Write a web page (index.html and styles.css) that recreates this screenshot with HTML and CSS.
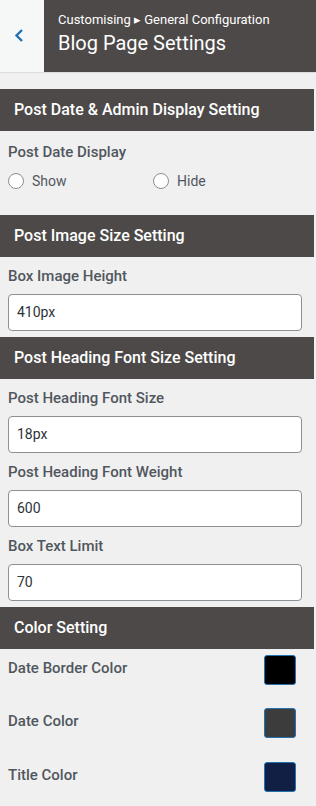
FILE: index.html
```html
<!DOCTYPE html>
<html>
	<head>
		<meta charset="utf-8">
		<title>Blog Page Settings</title>
		<link rel="stylesheet" href="styles.css">
	</head>
	<body>
		<header class="top">
			<button class="back" type="button">
				<svg width="24" height="24" viewBox="0 0 24 24"><polyline points="12,6 6.5,11.5 12,17" fill="none" stroke="#2271b1" stroke-width="2.4"/></svg>
			</button>
			<div class="title-wrap">
				<span class="crumb">Customising &#9656; General Configuration</span>
				<h1 class="title">Blog Page Settings</h1>
			</div>
		</header>

		<section class="group">
			<h2 class="group-title">Post Date &amp; Admin Display Setting</h2>
			<div class="group-body first">
				<span class="label">Post Date Display</span>
				<div class="options">
					<label class="opt"><input type="radio" name="pdd"> Show</label>
					<label class="opt"><input type="radio" name="pdd"> Hide</label>
				</div>
			</div>
		</section>

		<section class="group">
			<h2 class="group-title">Post Image Size Setting</h2>
			<div class="group-body">
				<div class="field">
					<span class="label">Box Image Height</span>
					<input class="text" type="text" value="410px">
				</div>
			</div>
		</section>

		<section class="group">
			<h2 class="group-title">Post Heading Font Size Setting</h2>
			<div class="group-body">
				<div class="field">
					<span class="label">Post Heading Font Size</span>
					<input class="text" type="text" value="18px">
				</div>
				<div class="field">
					<span class="label">Post Heading Font Weight</span>
					<input class="text" type="text" value="600">
				</div>
				<div class="field">
					<span class="label">Box Text Limit</span>
					<input class="text" type="text" value="70">
				</div>
			</div>
		</section>

		<section class="group">
			<h2 class="group-title">Color Setting</h2>
			<div class="color-row">
				<span class="label">Date Border Color</span>
				<span class="swatch black"></span>
			</div>
			<div class="color-row">
				<span class="label">Date Color</span>
				<span class="swatch grey"></span>
			</div>
			<div class="color-row">
				<span class="label">Title Color</span>
				<span class="swatch navy"></span>
			</div>
		</section>
	</body>
</html>
```

FILE: styles.css
```css
*{
	margin:0;
	padding:0;
	box-sizing:border-box;
}
body{
	width:316px;
	background:#f0f0f0;
	font-family:Roboto, "Liberation Sans", sans-serif;
	color:#50575e;
	overflow:hidden;
}
.top{
	display:flex;
	height:73px;
	border-bottom:1px solid #dcdcde;
	margin-bottom:16px;
}
.back{
	width:44px;
	flex:none;
	display:flex;
	align-items:center;
	justify-content:center;
	background:#f6f7f7;
	border:0;
}
.back svg{
	display:block;
}
.title-wrap{
	flex:1;
	background:#4d4948;
	color:#fff;
	padding:12px 14px 0;
}
.crumb{
	display:block;
	font-size:13px;
	line-height:16px;
}
.title{
	margin-top:2px;
	font-size:20px;
	line-height:26px;
	font-weight:400;
}
.group-title{
	width:314px;
	height:42px;
	padding:0 14px;
	background:#4d4948;
	color:#fff;
	font-size:16px;
	line-height:42px;
	font-weight:500;
}
.group-body{
	display:flex;
	flex-direction:column;
	gap:9px;
	padding:9px 8px 6px;
}
.group-body.first{
	display:block;
	padding:11px 8px 24px;
}
.label{
	display:block;
	font-size:15px;
	line-height:20px;
	font-weight:500;
	color:#50575e;
}
.field .label{
	margin-bottom:8px;
}
.text{
	display:block;
	width:294px;
	height:37px;
	padding:0 8px;
	border:1px solid #8c8f94;
	border-radius:4px;
	background:#fff;
	font-family:Roboto, "Liberation Sans", sans-serif;
	font-size:14px;
	color:#2c3338;
}
.options{
	display:grid;
	grid-template-columns:145px 145px;
	margin-top:8.5px;
}
.opt{
	display:flex;
	align-items:center;
	gap:8px;
	font-size:14px;
	line-height:20px;
	color:#50575e;
}
.opt input{
	appearance:none;
	width:16px;
	height:16px;
	border:1px solid #8c8f94;
	border-radius:50%;
	background:#fff;
	margin:0;
}
.color-row{
	display:flex;
	align-items:center;
	justify-content:space-between;
	padding:6px 20px 17.5px 8px;
}
.color-row .label{
	margin-bottom:4px;
}
.swatch{
	width:32px;
	height:30px;
	border:1px solid #2271b1;
	border-radius:3px;
}
.black{ background:#000; }
.grey{ background:#3c3c3c; }
.navy{ background:#121f44; }
```
